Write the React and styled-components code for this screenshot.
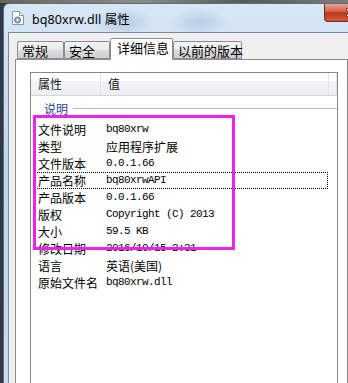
import React from "react";
import styled, { createGlobalStyle } from "styled-components";

const GlobalStyle = createGlobalStyle`
  html, body {
    margin: 0;
    padding: 0;
    background: #2f3a46;
  }
  body {
    font-family: "Noto Sans CJK SC", "Noto Sans", sans-serif;
  }
`;

const rows = [
  { label: "文件说明", value: "bq80xrw", mono: true },
  { label: "类型", value: "应用程序扩展" },
  { label: "文件版本", value: "0.0.1.66", mono: true },
  { label: "产品名称", value: "bq80xrwAPI", mono: true, focused: true },
  { label: "产品版本", value: "0.0.1.66", mono: true },
  { label: "版权", value: "Copyright (C) 2013", mono: true },
  { label: "大小", value: "59.5 KB", mono: true },
  { label: "修改日期", value: "2016/10/15 2:31", mono: true },
  { label: "语言", value: "英语(美国)" },
  { label: "原始文件名", value: "bq80xrw.dll", mono: true },
];

const tabs = [
  { name: "常规", width: 47 },
  { name: "安全", width: 46 },
  { name: "详细信息", width: 63, active: true },
  { name: "以前的版本", width: 69 },
];

const FileIcon = () => (
  <svg width="12" height="14" viewBox="0 0 12 14">
    <path d="M0.5 0.5h7l4 4v9h-11z" fill="#fdfdfd" stroke="#8a96a6" />
    <path d="M7.5 0.5v4h4" fill="#e4e8ee" stroke="#8a96a6" />
    <circle cx="5.5" cy="9" r="3" fill="#9fb0c4" stroke="#5e7088" />
    <circle cx="5.5" cy="9" r="1.1" fill="#fff" />
  </svg>
);

const CloseGlyph = () => (
  <svg width="10" height="9" viewBox="0 0 10 9">
    <path d="M1.5 1.5l7 6M8.5 1.5l-7 6" stroke="#5a1a12" strokeWidth="3" strokeLinecap="round" />
    <path d="M1.5 1.5l7 6M8.5 1.5l-7 6" stroke="#fff" strokeWidth="1.6" strokeLinecap="round" />
  </svg>
);

export default function App() {
  return (
    <Screen>
      <GlobalStyle />
      <TopStrip />
      <Window>
        <TitleBar>
          <FileIcon />
          <Title>bq80xrw.dll 属性</Title>
          <CloseButton>
            <CloseGlyph />
          </CloseButton>
        </TitleBar>
        <Client>
          <TabStrip>
            {tabs.map((t) => (
              <Tab key={t.name} $active={t.active} $width={t.width}>
                {t.name}
              </Tab>
            ))}
          </TabStrip>
          <Panel>
            <ListView>
              <Header>
                <HeaderCell $w={70}>属性</HeaderCell>
                <HeaderCell $w={228}>值</HeaderCell>
                <HeaderCell $w={8} />
              </Header>
              <GroupRow>
                <GroupLabel>说明</GroupLabel>
                <GroupLine />
              </GroupRow>
              {rows.map((r) => (
                <Row key={r.label} $focused={r.focused}>
                  <Label>{r.label}</Label>
                  <Value $mono={r.mono}>{r.value}</Value>
                </Row>
              ))}
            </ListView>
          </Panel>
        </Client>
      </Window>
      <Highlight />
    </Screen>
  );
}

const Screen = styled.div`
  position: relative;
  width: 348px;
  height: 383px;
  overflow: hidden;
  background: #2f3a46;
`;

const TopStrip = styled.div`
  height: 3px;
  background: linear-gradient(90deg, #6b6258, #8c8c8c 40%, #5a5a5a 70%, #7a7a7a);
`;

const Window = styled.div`
  margin-left: 3px;
  width: 360px;
  height: 390px;
  box-sizing: border-box;
  border: 1px solid #5b6b80;
  border-radius: 6px 6px 0 0;
  background: linear-gradient(180deg, #d8e7f6 0%, #c0d6ee 40%, #c6dbf0 100%);
  display: flex;
  flex-direction: column;
  overflow: hidden;
`;

const TitleBar = styled.div`
  flex-shrink: 0;
  height: 28px;
  display: flex;
  align-items: center;
  padding-left: 8px;
  gap: 8px;
  position: relative;
  background: radial-gradient(ellipse 30px 14px at 120px 18px, rgba(120, 150, 185, 0.35), transparent),
    radial-gradient(ellipse 30px 14px at 195px 18px, rgba(120, 150, 185, 0.3), transparent);
`;

const Title = styled.span`
  font-family: "Noto Sans", "Noto Sans CJK SC", sans-serif;
  font-size: 12.5px;
  color: #000;
  letter-spacing: 0.1px;
`;

const CloseButton = styled.div`
  position: absolute;
  left: 320px;
  top: -1px;
  width: 40px;
  height: 19px;
  box-sizing: border-box;
  border: 1px solid #6e2a22;
  border-top: none;
  border-radius: 0 0 0 4px;
  background: linear-gradient(180deg, #e8b0a0 0%, #d2664e 45%, #c0381f 55%, #d0583a 100%);
  display: flex;
  align-items: center;
  padding-left: 21px;
`;

const Client = styled.div`
  flex: 1;
  min-height: 0;
  margin-left: 4px;
  box-sizing: border-box;
  border: 1px solid #7c8a9a;
  border-right: none;
  background: #f0f0f0;
  display: flex;
  flex-direction: column;
  padding-left: 6px;
`;

const TabStrip = styled.div`
  flex-shrink: 0;
  display: flex;
  align-items: flex-end;
  height: 26px;
  padding-left: 2px;
  position: relative;
  z-index: 1;
`;

const Tab = styled.div`
  width: ${(p) => p.$width}px;
  box-sizing: border-box;
  height: ${(p) => (p.$active ? 22 : 18)}px;
  margin-bottom: ${(p) => (p.$active ? -1 : 0)}px;
  border: 1px solid #898c95;
  border-bottom: ${(p) => (p.$active ? "none" : "1px solid #898c95")};
  border-radius: 2px 2px 0 0;
  background: ${(p) =>
    p.$active ? "#ffffff" : "linear-gradient(180deg, #f3f3f3 0%, #ebebeb 50%, #dcdcdc 51%, #cfcfcf 100%)"};
  font-size: 13px;
  line-height: 17px;
  padding-left: ${(p) => (p.$active ? 6 : 4)}px;
  color: #000;
  white-space: nowrap;
`;

const Panel = styled.div`
  flex: 1;
  min-height: 0;
  overflow: hidden;
  box-sizing: border-box;
  border: 1px solid #898c95;
  background: #fff;
  width: 333px;
  padding: 12px 0 0 14px;
`;

const ListView = styled.div`
  position: relative;
  width: 308px;
  height: 400px;
  box-sizing: border-box;
  border: 1px solid #828790;
  background: #fff;
`;

const Header = styled.div`
  display: flex;
  height: 23px;
  box-sizing: border-box;
  border-bottom: 1px solid #d5d5d5;
  background: linear-gradient(180deg, #ffffff 0%, #ffffff 35%, #f3f4f6 36%, #eceef1 100%);
`;

const HeaderCell = styled.div`
  width: ${(p) => p.$w}px;
  box-sizing: border-box;
  border-right: 1px solid #e2e3e5;
  padding-left: 7px;
  font-size: 12px;
  line-height: 22px;
  color: #1a1a1a;
`;

const GroupRow = styled.div`
  display: flex;
  align-items: center;
  height: 18px;
  margin: 3px 0 4px;
  padding-left: 13px;
  gap: 5px;
`;

const GroupLabel = styled.span`
  font-size: 12px;
  color: #1e3d9b;
`;

const GroupLine = styled.div`
  width: 264px;
  height: 1px;
  background: #a9bde6;
`;

const Row = styled.div`
  display: grid;
  grid-template-columns: 66px 1fr;
  height: 17px;
  box-sizing: border-box;
  margin: 0 9px 0 3px;
  border: 1px dotted ${(p) => (p.$focused ? "#000" : "transparent")};
  align-items: center;
`;

const Label = styled.div`
  padding-left: 3px;
  font-size: 12px;
  line-height: 15px;
  color: #000;
  white-space: nowrap;
`;

const Value = styled.div`
  padding-left: 5px;
  white-space: nowrap;
  color: #000;
  font-family: ${(p) =>
    p.$mono ? `"Liberation Mono", "Noto Sans CJK SC", monospace` : `"Noto Sans CJK SC", sans-serif`};
  font-size: ${(p) => (p.$mono ? 11 : 12)}px;
  letter-spacing: ${(p) => (p.$mono ? -0.6 : 0)}px;
  line-height: 15px;
`;

const Highlight = styled.div`
  position: absolute;
  left: 33px;
  top: 115px;
  width: 202px;
  height: 135px;
  box-sizing: border-box;
  border: 3px solid #f020f0;
  pointer-events: none;
`;
